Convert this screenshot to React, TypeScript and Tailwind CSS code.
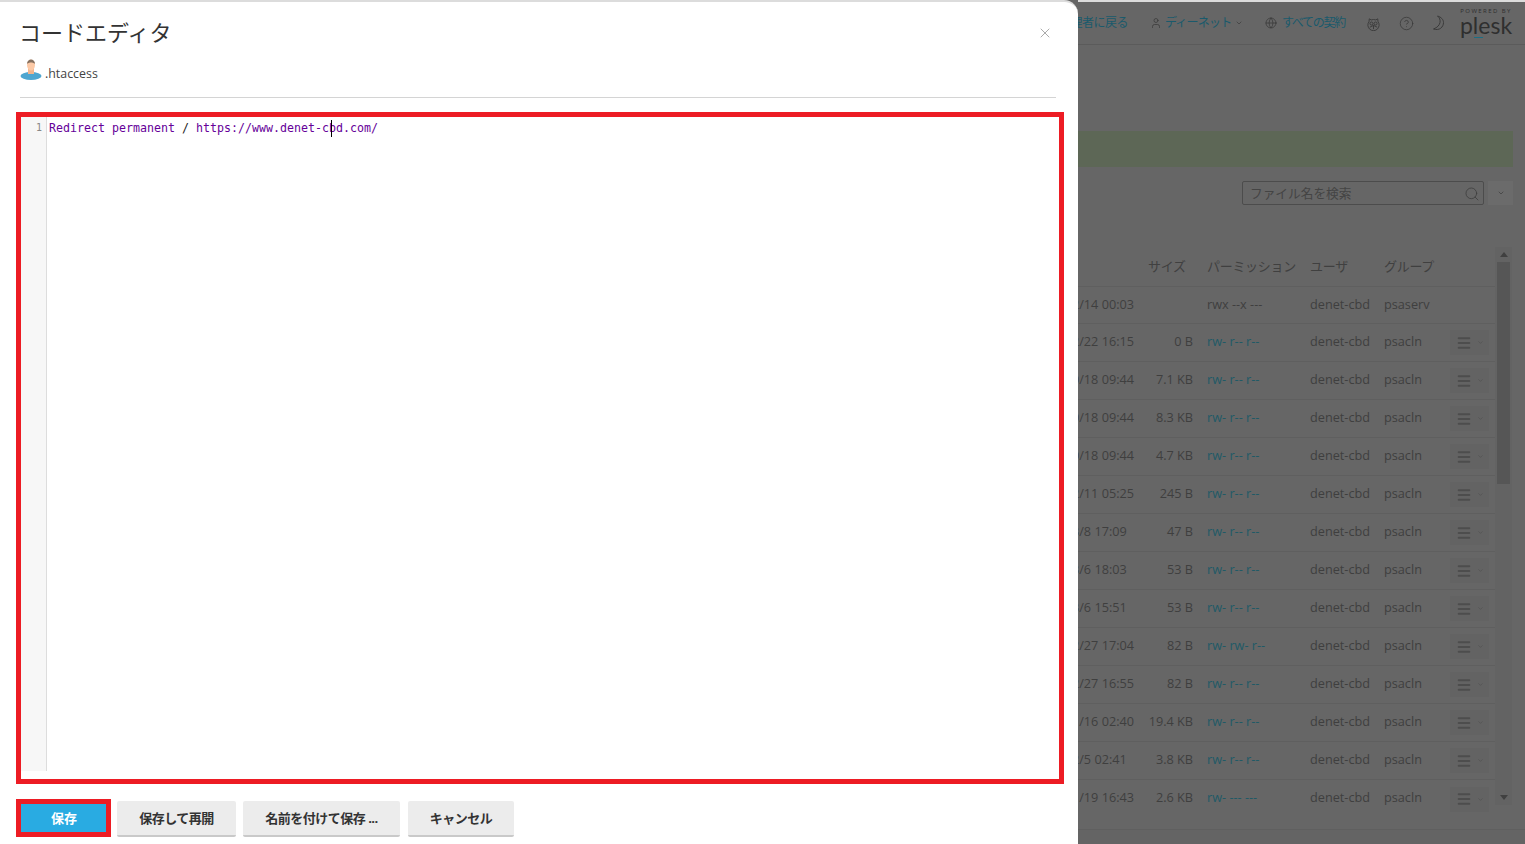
import { ChevronDown, Globe, HelpCircle, Menu, Search, User, X } from "lucide-react";

const rows = [
  { date: "2024/12/14 00:03", size: "", perm: "rwx --x ---", group: "psaserv", plain: true },
  { date: "2024/12/22 16:15", size: "0 B", perm: "rw- r-- r--", group: "psacln" },
  { date: "2024/10/18 09:44", size: "7.1 KB", perm: "rw- r-- r--", group: "psacln" },
  { date: "2024/10/18 09:44", size: "8.3 KB", perm: "rw- r-- r--", group: "psacln" },
  { date: "2024/10/18 09:44", size: "4.7 KB", perm: "rw- r-- r--", group: "psacln" },
  { date: "2024/12/11 05:25", size: "245 B", perm: "rw- r-- r--", group: "psacln" },
  { date: "2024/03/8 17:09", size: "47 B", perm: "rw- r-- r--", group: "psacln" },
  { date: "2024/03/6 18:03", size: "53 B", perm: "rw- r-- r--", group: "psacln" },
  { date: "2024/03/6 15:51", size: "53 B", perm: "rw- r-- r--", group: "psacln" },
  { date: "2024/02/27 17:04", size: "82 B", perm: "rw- rw- r--", group: "psacln" },
  { date: "2024/02/27 16:55", size: "82 B", perm: "rw- r-- r--", group: "psacln" },
  { date: "2024/01/16 02:40", size: "19.4 KB", perm: "rw- r-- r--", group: "psacln" },
  { date: "2023/12/5 02:41", size: "3.8 KB", perm: "rw- r-- r--", group: "psacln" },
  { date: "2023/11/19 16:43", size: "2.6 KB", perm: "rw- --- ---", group: "psacln" },
];

const ActionButton = ({ label, width }: { label: string; width: string }) => (
  <button
    className={`h-[36px] pt-[1px] ${width} bg-[#ececec] border-b-2 border-[#c9c9c9] rounded-[2px] text-[13px] font-bold text-[#333] tracking-[-0.5px]`}
  >
    {label}
  </button>
);

const PleskBackground = () => (
  <div className="relative flex-1 min-w-0 overflow-hidden h-full bg-[#666666] font-['Open_Sans','Noto_Sans_CJK_JP',sans-serif] text-[#3f3f3f]">
    {/* Header */}
    <div className="h-[45px] border-t-2 border-t-[#dcdcdc] border-b border-b-[#5b5b5b] flex items-center text-[#1a5a6c] text-[12px] whitespace-nowrap">
      <span className="w-[50px] overflow-hidden flex justify-end shrink-0 tracking-[-0.5px]">管理者に戻る</span>
      <User className="ml-[22px] h-[12px] w-[12px] shrink-0 text-[#3a3a3a]" strokeWidth={1.5} />
      <span className="ml-[3px] w-[67px] shrink-0 tracking-[-0.8px]">ディーネット</span>
      <ChevronDown className="ml-[3px] h-[8px] w-[8px] shrink-0 text-[#3a3a3a]" />
      <Globe className="ml-[22px] h-[12px] w-[12px] shrink-0 text-[#3a3a3a]" strokeWidth={1.5} />
      <span className="ml-[5px] w-[64px] shrink-0 tracking-[-1.3px]">すべての契約</span>
      <svg viewBox="0 0 16 16" className="ml-[20px] h-[15px] w-[15px] shrink-0 text-[#3a3a3a]" fill="none" stroke="currentColor">
        <path d="M3.5 3l2 1.2a7 7 0 0 1 5 0L12.5 3l.3 3a6 6 0 1 1-9.6 0z" />
        <circle cx="5.8" cy="8" r="1.6" />
        <circle cx="10.2" cy="8" r="1.6" />
        <path d="M8 10v4M4 12l4-2 4 2" />
      </svg>
      <HelpCircle className="ml-[18px] h-[15px] w-[15px] shrink-0 text-[#3a3a3a]" strokeWidth={1.25} />
      <svg viewBox="0 0 14 16" className="ml-[16px] h-[16px] w-[15px] shrink-0 text-[#3a3a3a]" fill="none" stroke="currentColor">
        <path d="M7 1c4 3 4 10-4 13 6 2 10-2 10-6.500C13 4.500 10.500 2 7 1z" />
      </svg>
      <div className="ml-[15px] w-[52px] shrink-0 flex flex-col items-center text-[#2f2f2f]">
        <span className="text-[6px] leading-[7px] tracking-[1.4px] -mt-[4px]">POWERED BY</span>
        <span className="relative text-[23px] leading-[20px] font-['Lato',sans-serif]">
          plesk
          <span className="absolute left-[14px] bottom-[-3px] h-[1px] w-[9px] bg-[#1b6f85]" />
        </span>
      </div>
    </div>

    {/* Green notice */}
    <div className="mt-[86px] mr-[12px] h-[36px] bg-[#5d6756]" />

    {/* Search */}
    <div className="mt-[14px] mr-[12px] flex justify-end gap-[4px]">
      <div className="w-[242px] h-[24px] border border-[#4c4c4c] rounded-[2px] flex items-center justify-between pl-[7px] pr-[3px] pt-[1px] text-[12.7px] text-[#444]">
        <span>ファイル名を検索</span>
        <Search className="h-[16px] w-[16px] text-[#3f3f3f]" strokeWidth={1.25} />
      </div>
      <div className="w-[25px] h-[24px] bg-[#6b6b6b] flex items-center justify-center">
        <ChevronDown className="h-[8px] w-[8px] text-[#3a3a3a]" />
      </div>
    </div>

    {/* File table with scrollbar */}
    <div className="mt-[42px] flex items-start">
      <div className="w-[418px] shrink-0">
        <div className="h-[40px] flex items-center border-b border-[#5f5f5f] text-[13px] text-[#404040] tracking-[-0.3px] whitespace-nowrap">
          <span className="w-[70px]" />
          <span className="w-[59px]">サイズ</span>
          <span className="w-[103px]">パーミッション</span>
          <span className="w-[74px]">ユーザ</span>
          <span>グループ</span>
        </div>
        {rows.map((r, i) => (
          <div
            key={i}
            className={`${i === 0 ? "h-[37px]" : "h-[38px]"} ${i === rows.length - 1 ? "" : "border-b border-[#5f5f5f]"} flex items-center text-[12.7px] whitespace-nowrap`}
          >
            <div className={`flex items-center shrink-0 ${i === 0 ? "" : "-mt-[2px]"}`}>
              <span className="w-[61px] overflow-hidden shrink-0">
                <span className="block -ml-[47px]">{r.date}</span>
              </span>
              <span className="w-[54px] text-right shrink-0">{r.size}</span>
              <span className={`w-[117px] pl-[14px] shrink-0 ${r.plain ? "" : "text-[#1f5a66]"}`}>{r.perm}</span>
              <span className="w-[74px] shrink-0">denet-cbd</span>
              <span className="w-[66px] shrink-0">{r.group}</span>
            </div>
            {!r.plain && (
              <span className="w-[39px] h-[25px] bg-[#636363] flex items-center pl-[6px] gap-[5px] shrink-0">
                <Menu className="h-[16px] w-[16px] text-[#4d4d4d]" strokeWidth={3} />
                <ChevronDown className="h-[7px] w-[7px] text-[#4d4d4d]" />
              </span>
            )}
          </div>
        ))}
      </div>

      {/* Scrollbar */}
      <div className="w-[17px] h-[558px] bg-[#636363] flex flex-col items-center justify-between pb-[5px] pt-[5px] text-[#404040] -ml-[1px]">
        <svg viewBox="0 0 8 5" className="w-[8px] h-[5px] fill-current">
          <path d="M4 0l4 5H0z" />
        </svg>
        <div className="absolute mt-[10px] w-[13px] h-[222px] bg-[#565656]" />
        <svg viewBox="0 0 8 5" className="w-[8px] h-[5px] fill-current">
          <path d="M4 5l4-5H0z" />
        </svg>
      </div>
    </div>
    <div className="absolute left-0 right-0 top-[829px] bottom-0 border-t border-[#5f5f5f] bg-[#646464]" />
  </div>
);

export default function App() {
  return (
    <div className="flex w-[1525px] h-[844px] overflow-hidden bg-[#666666]">
      {/* Dialog */}
      <div className="relative z-10 flex flex-col w-[1078px] h-full shrink-0 bg-white rounded-tr-[14px] border-t-2 border-t-[#dcdcdc] pl-[16px] pr-[14px] font-['Open_Sans','Noto_Sans_CJK_JP',sans-serif] text-[#333]">
        <div className="pl-[3px] pt-[15px] flex items-start justify-between pr-[11px]">
          <h2 className="text-[22px] leading-[28px] text-[#333] font-normal font-['Noto_Sans_CJK_JP',sans-serif]">コードエディタ</h2>
          <button className="mt-[8px] text-[#8a8a8a]">
            <X className="h-[16px] w-[16px]" strokeWidth={1.1} />
          </button>
        </div>

        <div className="ml-[4px] mr-[8px] mt-[14px] h-[39px] border-b border-[#d4d4d4] flex items-start gap-[3px]">
          <svg viewBox="0 0 22 22" className="w-[22px] h-[22px] -mt-[1px]">
            <ellipse cx="11" cy="18" rx="10.500" ry="4" fill="#4ea6d0" />
            <rect x="8" y="9" width="6" height="7" fill="#f2b48c" />
            <ellipse cx="11" cy="7" rx="4" ry="5.500" fill="#fcc9a6" />
            <path d="M7 6c0-6 8-6 8 0-2-2-6-2-8 0z" fill="#85705f" />
          </svg>
          <span className="text-[12.4px] leading-[22px] text-[#444] mt-[4px]">.htaccess</span>
        </div>

        {/* Editor */}
        <div className="mt-[14px] h-[672px] border-[5px] border-[#ed1c24] flex pb-[8px] pr-[1px]">
          <div className="w-[26px] bg-[#f7f7f7] border-r border-[#dddddd] pr-[4px] pt-[1px] text-right font-['DejaVu_Sans_Mono',monospace] text-[10px] leading-[20px] text-[#888]">
            1
          </div>
          <div className="relative pl-[2px] pt-[1px] font-['DejaVu_Sans_Mono',monospace] text-[11.63px] leading-[20px] text-[#660099] whitespace-pre">
            Redirect permanent <span className="text-[#222]">/</span> https://www.denet-cbd.com/
            <span className="absolute left-[284px] top-[3px] h-[17px] w-px bg-black" />
          </div>
        </div>

        {/* Actions */}
        <div className="mt-[15px] flex items-end gap-[6px]">
          <div className="border-[5px] border-[#ed1c24]">
            <button className="block w-[85px] h-[28px] pl-[1px] pt-[1px] bg-[#29abe2] text-white text-[13px] font-bold">保存</button>
          </div>
          <ActionButton label="保存して再開" width="w-[119px]" />
          <ActionButton label="名前を付けて保存 ..." width="w-[157px] ml-[1px]" />
          <ActionButton label="キャンセル" width="w-[106px] ml-[2px]" />
        </div>
      </div>

      <PleskBackground />
    </div>
  );
}
